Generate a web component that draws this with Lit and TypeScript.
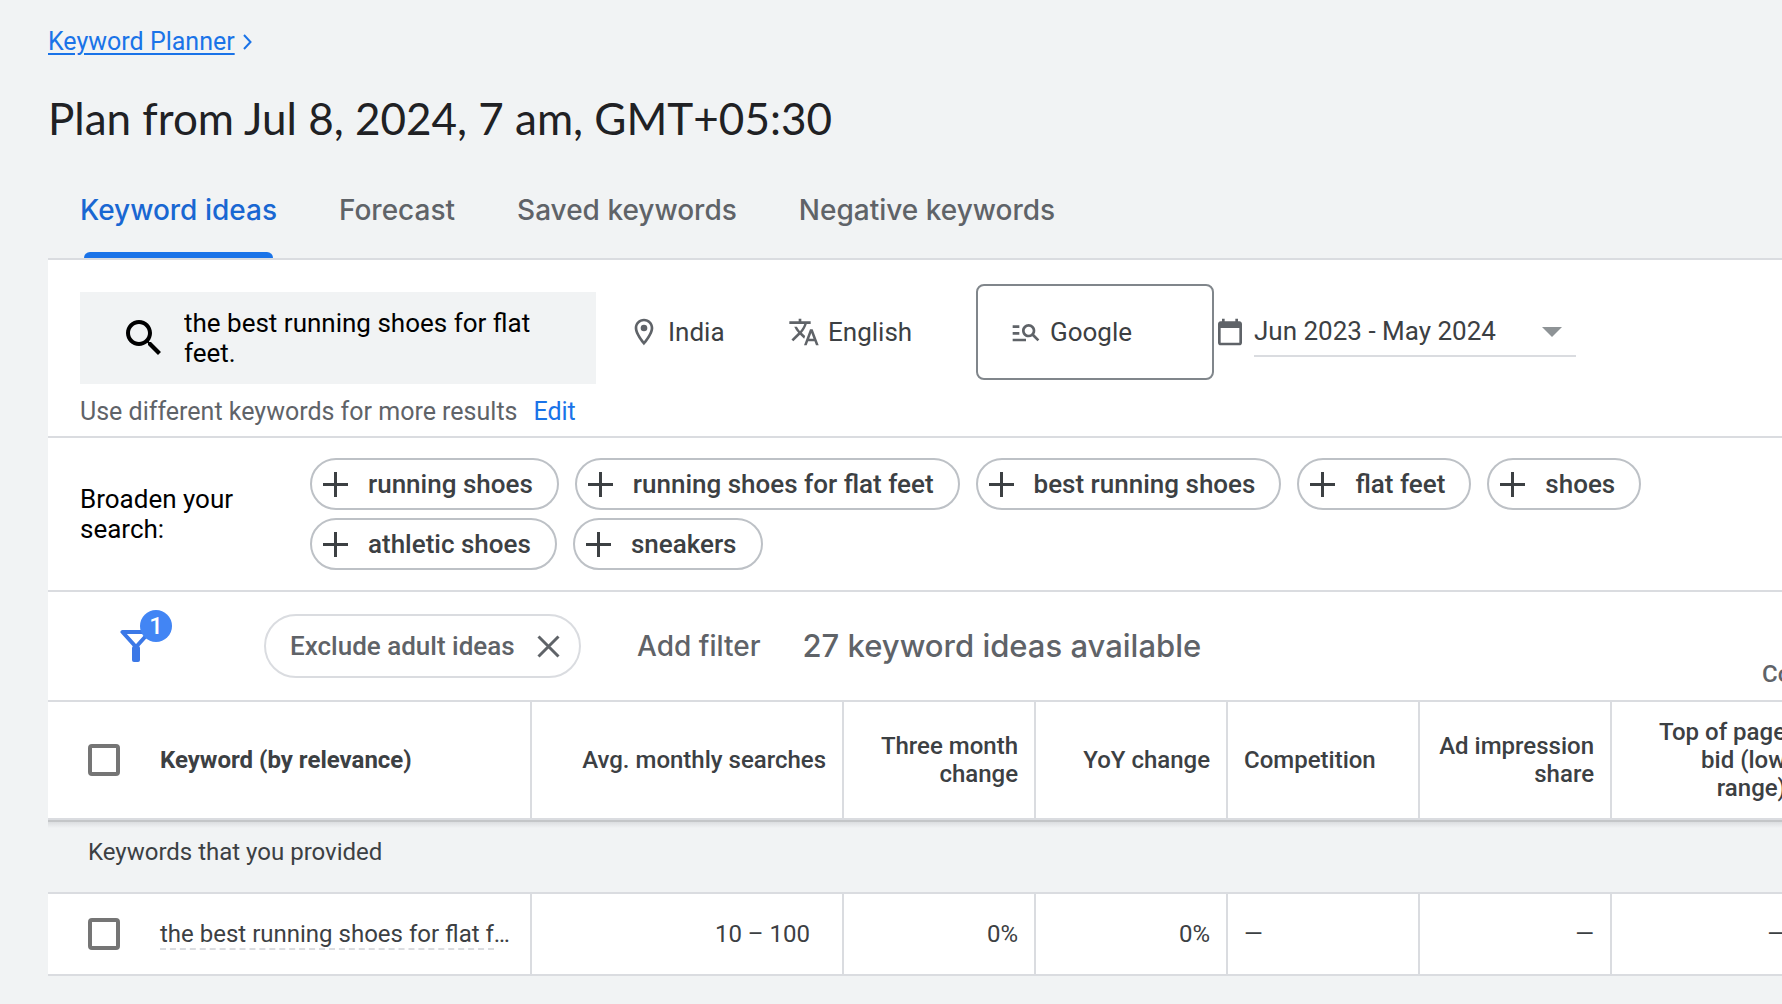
import { LitElement, html, css, svg } from "lit";
import { customElement, state } from "lit/decorators.js";
import { classMap } from "lit/directives/class-map.js";

const TABS = ["Keyword ideas", "Forecast", "Saved keywords", "Negative keywords"];

const BROADEN = [
  "running shoes",
  "running shoes for flat feet",
  "best running shoes",
  "flat feet",
  "shoes",
  "athletic shoes",
  "sneakers",
];

const ICONS = {
  search:
    "M15.5 14h-.79l-.28-.27C15.41 12.59 16 11.11 16 9.5 16 5.91 13.09 3 9.5 3S3 5.91 3 9.5 5.91 16 9.5 16c1.61 0 3.09-.59 4.23-1.57l.27.28v.79l5 4.99L20.49 19l-4.99-5zm-6 0C7.01 14 5 11.99 5 9.5S7.01 5 9.5 5 14 7.01 14 9.5 11.99 14 9.5 14z",
  place:
    "M12 2C8.13 2 5 5.13 5 9c0 5.25 7 13 7 13s7-7.75 7-13c0-3.87-3.13-7-7-7zM7 9c0-2.76 2.24-5 5-5s5 2.24 5 5c0 2.88-2.88 7.19-5 9.88C9.92 16.21 7 11.85 7 9zm5-2.5a2.5 2.5 0 1 0 0 5 2.5 2.5 0 0 0 0-5z",
  translate:
    "M12.87 15.07l-2.54-2.51.03-.03c1.74-1.94 2.98-4.17 3.71-6.53H17V4h-7V2H8v2H1v1.99h11.17C11.5 7.92 10.44 9.75 9 11.35 8.07 10.32 7.3 9.19 6.69 8h-2c.73 1.63 1.73 3.17 2.98 4.56l-5.09 5.02L4 19l5-5 3.11 3.11.76-2.04zM18.5 10h-2L12 22h2l1.12-3h4.75L21 22h2l-4.5-12zm-2.62 7l1.62-4.33L19.12 17h-3.24z",
  network:
    "M7 9H2V7h5v2zm0 3H2v2h5v-2zm13.59 7l-3.83-3.83c-.8.52-1.74.83-2.76.83-2.76 0-5-2.24-5-5s2.24-5 5-5 5 2.24 5 5c0 1.02-.31 1.96-.83 2.75L22 17.59 20.59 19zM17 11c0-1.65-1.35-3-3-3s-3 1.35-3 3 1.35 3 3 3 3-1.35 3-3zM2 19h10v-2H2v2z",
  calendar:
    "M19 4h-1V2h-2v2H8V2H6v2H5c-1.11 0-1.99.9-1.99 2L3 20c0 1.1.89 2 2 2h14c1.1 0 2-.9 2-2V6c0-1.1-.9-2-2-2zm0 16H5V9h14v11z",
  arrow: "M7 10l5 5 5-5z",
};

const icon = (name: keyof typeof ICONS, cls = "") => html`
  <svg class="icon ${cls}" viewBox="0 0 24 24" aria-hidden="true">${svg`<path d=${ICONS[name]}></path>`}</svg>
`;

@customElement("app-root")
export class AppRoot extends LitElement {
  @state() private activeTab = 0;

  static styles = css`
    :host {
      display: block;
      min-height: 100vh;
      overflow: hidden;
      background: #f1f3f4;
      color: #3c4043;
      font: 400 24px/28px Roboto, "Liberation Sans", sans-serif;
    }
    *,
    *::before {
      box-sizing: border-box;
    }
    button,
    select,
    textarea {
      font: inherit;
      color: inherit;
      background: none;
      border: 0;
      padding: 0;
      margin: 0;
      text-align: left;
    }
    button,
    select {
      cursor: pointer;
    }
    .icon {
      width: 32px;
      height: 32px;
      flex: none;
      fill: #5f6368;
    }
    .page {
      padding: 28px 0 0 48px;
    }
    .crumbs {
      display: flex;
      align-items: center;
      gap: 8px;
      font-size: 25px;
      color: #1a73e8;
    }
    .crumbs a {
      color: inherit;
      text-decoration-thickness: 2px;
      text-underline-offset: 3px;
    }
    .chevron {
      width: 9px;
      height: 16px;
      fill: none;
      stroke: #1a73e8;
      stroke-width: 2;
    }
    h1 {
      margin: 34px 0 0;
      font: 400 44px/56px Lato, Roboto, sans-serif;
      color: #202124;
    }
    .tabs {
      display: flex;
      gap: 62px;
      padding: 36px 32px 0;
    }
    .tab {
      position: relative;
      height: 76px;
      padding-bottom: 20px;
      font: 500 28px/32px Inter, Roboto, sans-serif;
      color: #5f6368;
      white-space: nowrap;
    }
    .tab.active {
      color: #1967d2;
    }
    .tab.active::before {
      content: "";
      position: absolute;
      left: 4px;
      right: 4px;
      bottom: 0;
      height: 6px;
      border-radius: 6px 6px 0 0;
      background: #1a73e8;
    }
    .panel {
      background: #fff;
      border-top: 2px solid #dadce0;
    }
    .targeting {
      display: flex;
      align-items: flex-start;
      padding: 24px 32px 0;
      height: 176px;
      font-size: 26px;
    }
    .seed {
      width: 516px;
      margin-top: 8px;
    }
    .seed-box {
      display: flex;
      align-items: center;
      height: 92px;
      padding: 0 32px 0 40px;
      gap: 16px;
      background: #f1f3f4;
    }
    .icon.large {
      width: 48px;
      height: 48px;
      fill: #000;
    }
    .seed-box textarea {
      flex: 1;
      min-width: 0;
      height: 60px;
      resize: none;
      overflow: hidden;
      outline: 0;
      color: #000;
      line-height: 30px;
    }
    .hint {
      display: flex;
      gap: 16px;
      margin: 14px 0 0;
      font-size: 25px;
      color: #5f6368;
      white-space: nowrap;
    }
    .hint button {
      color: #1a73e8;
    }
    .options {
      display: flex;
      align-items: center;
      height: 96px;
    }
    .option {
      display: flex;
      align-items: center;
      gap: 8px;
      padding: 0 32px;
    }
    .location {
      width: 160px;
    }
    .language {
      width: 220px;
    }
    .network {
      width: 238px;
      height: 96px;
      border: 2px solid #80868b;
      border-radius: 8px;
    }
    .date {
      display: flex;
      align-items: center;
      gap: 8px;
    }
    .date-field {
      display: grid;
      grid-template-columns: 1fr 48px;
      align-items: center;
      width: 322px;
      height: 50px;
      border-bottom: 2px solid #dadce0;
    }
    .date-field select {
      grid-area: 1 / 1 / 2 / 3;
      appearance: none;
      outline: 0;
    }
    .date-field .icon {
      grid-area: 1 / 2;
      width: 48px;
      height: 48px;
      fill: #8e9396;
      pointer-events: none;
    }
    .broaden {
      display: flex;
      align-items: center;
      padding: 20px 32px;
      border-top: 2px solid #dadce0;
      font-size: 26px;
      line-height: 30px;
    }
    .broaden-label {
      width: 230px;
      flex: none;
      margin: 0;
      padding-right: 60px;
      color: #000;
    }
    .chips {
      display: flex;
      flex-wrap: wrap;
      gap: 8px 16px;
      max-width: 1400px;
    }
    .chip {
      display: flex;
      align-items: center;
      gap: 20px;
      height: 52px;
      padding: 0 24px 0 11px;
      border: 2px solid #bdc1c6;
      border-radius: 26px;
      font-weight: 500;
      white-space: nowrap;
    }
    .plus,
    .cross {
      flex: none;
      width: 25px;
      height: 25px;
      fill: none;
      stroke: #3c4043;
      stroke-width: 3;
    }
    .filters {
      display: flex;
      align-items: center;
      height: 110px;
      padding-left: 72px;
      border-top: 2px solid #dadce0;
      font-size: 26px;
      font-weight: 500;
      color: #5f6368;
      white-space: nowrap;
    }
    .funnel {
      width: 52px;
      height: 56px;
      margin-bottom: 16px;
    }
    .funnel svg {
      display: block;
      width: 52px;
      height: 56px;
    }
    .funnel text {
      font: 500 24px Roboto, sans-serif;
      fill: #fff;
      text-anchor: middle;
    }
    .applied {
      display: flex;
      align-items: center;
      justify-content: space-between;
      width: 317px;
      height: 64px;
      margin-left: 92px;
      padding: 0 18px 0 24px;
      border: 2px solid #dadce0;
      border-radius: 32px;
    }
    .cross {
      stroke: #5f6368;
    }
    .add {
      margin-left: 56px;
      font: 500 28px/32px Inter, Roboto, sans-serif;
    }
    .count {
      margin: 0 0 0 42px;
      font: 500 31px/36px Inter, Roboto, sans-serif;
    }
    .columns {
      flex: none;
      align-self: flex-end;
      width: 20px;
      margin: 0 0 12px auto;
      font-size: 24px;
      font-weight: 500;
    }
    .scroller {
      overflow: hidden;
    }
    table {
      width: 100%;
      min-width: 1756px;
      table-layout: fixed;
      border-collapse: separate;
      border-spacing: 0;
    }
    .w-keyword {
      width: 484px;
    }
    .w-volume {
      width: 312px;
    }
    .w-metric {
      width: 192px;
    }
    th,
    td {
      padding: 0 16px;
      border-right: 2px solid #dadce0;
      text-align: right;
    }
    thead th {
      height: 120px;
      border-top: 2px solid #dadce0;
      border-bottom: 2px solid #dadce0;
      font-weight: 500;
    }
    th.start,
    td.start {
      text-align: left;
    }
    thead th.keyword {
      font-weight: 700;
    }
    .keyword {
      padding-left: 40px;
      padding-right: 16px;
      text-align: left;
    }
    .pick {
      display: flex;
      align-items: center;
      gap: 40px;
      white-space: nowrap;
    }
    .pick input {
      appearance: none;
      flex: none;
      width: 32px;
      height: 32px;
      margin: 0;
      border: 4px solid #757575;
      border-radius: 4px;
    }
    .term span {
      border-bottom: 2px dashed #dadce0;
    }
    tbody .group {
      height: 74px;
      padding: 0 40px 8px;
      border-right: 0;
      border-bottom: 2px solid #dadce0;
      background: linear-gradient(#c4c6c8 0 2px, #dcdee0 2px, #f1f3f4 8px);
      font-weight: 400;
      text-align: left;
    }
    tbody td {
      height: 82px;
      border-bottom: 2px solid #dadce0;
    }
    td.volume {
      padding-right: 32px;
    }
  `;

  private renderChip(label: string) {
    return html`<button class="chip">
      <svg class="plus" viewBox="0 0 25 25" aria-hidden="true"><path d="M12.5 0v25M0 12.5h25"></path></svg>
      ${label}
    </button>`;
  }

  render() {
    return html`
      <main class="page">
        <nav class="crumbs">
          <a href="#planner">Keyword Planner</a>
          <svg class="chevron" viewBox="0 0 9 16" aria-hidden="true"><path d="M1 1l6.500 7L1 15"></path></svg>
        </nav>
        <h1>Plan from Jul 8, 2024, 7 am, GMT+05:30</h1>

        <div class="tabs" role="tablist">
          ${TABS.map(
            (label, i) => html`<button
              role="tab"
              aria-selected=${i === this.activeTab ? "true" : "false"}
              class=${classMap({ tab: true, active: i === this.activeTab })}
              @click=${() => (this.activeTab = i)}
            >${label}</button>`
          )}
        </div>

        <section class="panel">
          <div class="targeting">
            <div class="seed">
              <label class="seed-box">
                ${icon("search", "large")}
                <textarea rows="2" spellcheck="false" .value=${"the best running shoes for flat feet."}></textarea>
              </label>
              <p class="hint">Use different keywords for more results <button>Edit</button></p>
            </div>
            <div class="options">
              <button class="option location">${icon("place")}India</button>
              <button class="option language">${icon("translate")}English</button>
              <button class="option network">${icon("network")}Google</button>
              <label class="date">
                ${icon("calendar")}
                <span class="date-field">
                  <select><option>Jun 2023 - May 2024</option></select>
                  ${icon("arrow")}
                </span>
              </label>
            </div>
          </div>

          <div class="broaden">
            <p class="broaden-label">Broaden your search:</p>
            <div class="chips">${BROADEN.map((label) => this.renderChip(label))}</div>
          </div>

          <div class="filters">
            <button class="funnel">
              <svg viewBox="0 0 52 56">
                <g fill="none" stroke="#3b78e7" stroke-linejoin="round">
                  <path d="M2.500 22h27L16 37z" stroke-width="4"></path>
                  <path d="M14 38h4v12h-4z" fill="#3b78e7" stroke-width="4"></path>
                </g>
                <circle cx="36" cy="16" r="16" fill="#4285f4"></circle>
                <text x="36" y="24">1</text>
              </svg>
            </button>
            <button class="applied">
              Exclude adult ideas
              <svg class="cross" viewBox="0 0 25 25" aria-hidden="true"><path d="M2.500 2.500l20 20M22.500 2.500l-20 20"></path></svg>
            </button>
            <button class="add">Add filter</button>
            <p class="count">27 keyword ideas available</p>
            <button class="columns">Columns</button>
          </div>

          <div class="scroller">
            <table>
              <colgroup>
                <col class="w-keyword" />
                <col class="w-volume" />
                ${[0, 1, 2, 3, 4].map(() => html`<col class="w-metric" />`)}
              </colgroup>
              <thead>
                <tr>
                  <th class="keyword" scope="col">
                    <label class="pick"><input type="checkbox" />Keyword (by relevance)</label>
                  </th>
                  <th scope="col">Avg. monthly searches</th>
                  <th scope="col">Three month change</th>
                  <th scope="col">YoY change</th>
                  <th scope="col" class="start">Competition</th>
                  <th scope="col">Ad impression share</th>
                  <th scope="col">Top of page bid (low range)</th>
                </tr>
              </thead>
              <tbody>
                <tr>
                  <th class="group" colspan="7" scope="rowgroup">Keywords that you provided</th>
                </tr>
                <tr>
                  <td class="keyword">
                    <label class="pick">
                      <input type="checkbox" />
                      <span class="term"><span>the best running shoes for flat f</span>…</span>
                    </label>
                  </td>
                  <td class="volume">10 – 100</td>
                  <td>0%</td>
                  <td>0%</td>
                  <td class="start">—</td>
                  <td>—</td>
                  <td>—</td>
                </tr>
              </tbody>
            </table>
          </div>
        </section>
      </main>
    `;
  }
}
